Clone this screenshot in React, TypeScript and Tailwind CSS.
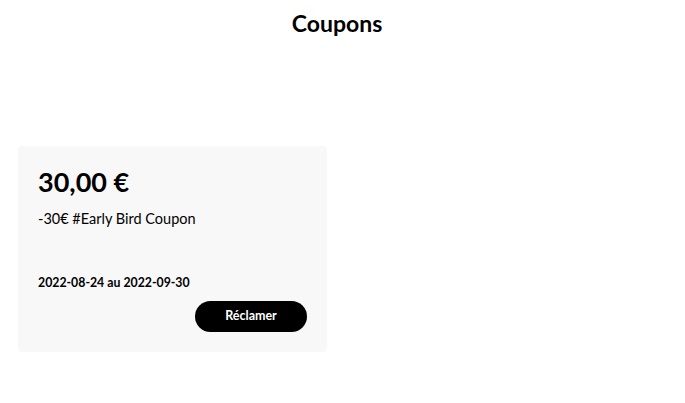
const App = () => {
  return (
    <div className="min-h-screen bg-white font-['Lato',sans-serif] text-black">
      <h1 className="pr-[11px] pt-[9px] text-center text-[23px] font-bold leading-[28px]">Coupons</h1>
      <div className="mt-[109px] grid grid-cols-2 gap-5 px-[18px]">
        <div className="flex h-[206px] w-[309px] flex-col rounded-[4px] bg-[#f8f8f8] px-5 pt-[20px]">
          <p className="text-[27px] font-bold leading-[32px]">30,00 €</p>
          <p className="mt-[12px] text-[14.5px] leading-[18px]">-30€ #Early Bird Coupon</p>
          <p className="mt-[47px] text-[12.3px] font-bold leading-[16px]">2022-08-24 au 2022-09-30</p>
          <div className="mt-[10px] flex justify-end">
            <button className="h-[31px] w-[112px] rounded-full bg-black text-[12.5px] font-bold text-white">
              Réclamer
            </button>
          </div>
        </div>
      </div>
    </div>
  );
};

export default App;
